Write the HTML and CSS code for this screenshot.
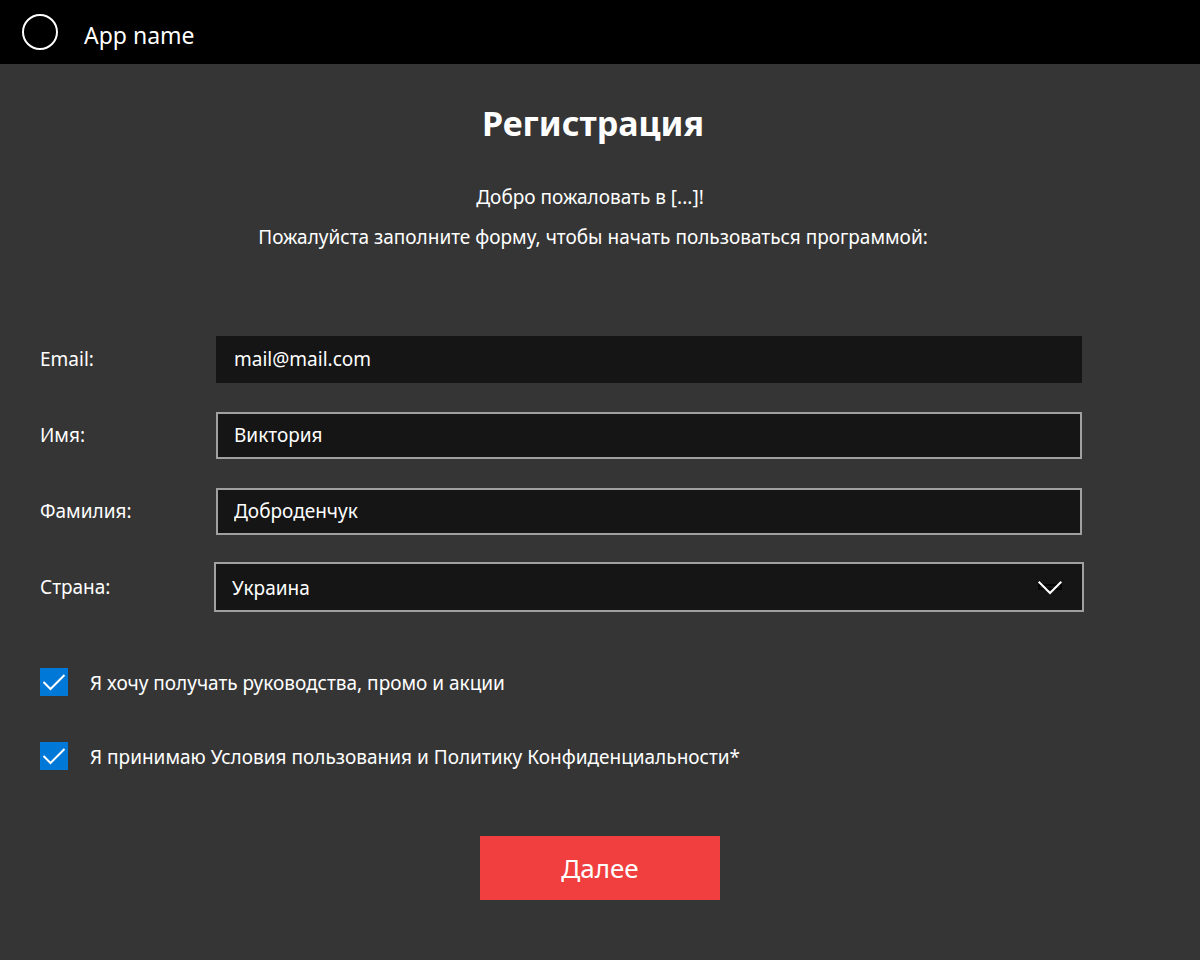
FILE: index.html
```html
<!DOCTYPE html>
<html lang="ru">
<head>
<meta charset="utf-8">
<meta name="viewport" content="width=device-width, initial-scale=1">
<title>Регистрация</title>
<link rel="stylesheet" href="styles.css">
</head>
<body>
<header class="topbar">
  <svg class="logo" viewBox="0 0 36 36" aria-hidden="true"><circle cx="18" cy="18" r="17" fill="none" stroke="currentColor" stroke-width="2"/></svg>
  <span class="app-name">App name</span>
</header>
<main class="page">
  <div class="intro">
    <h1 class="title">Регистрация</h1>
    <p class="welcome">Добро пожаловать в [...]!</p>
    <p class="lead">Пожалуйста заполните форму, чтобы начать пользоваться программой:</p>
  </div>
  <form class="form">
    <div class="fields">
      <div class="row">
        <label class="label" for="email">Email:</label>
        <input class="control control-plain" id="email" type="email" value="mail@mail.com" readonly>
      </div>
      <div class="row">
        <label class="label" for="first">Имя:</label>
        <input class="control" id="first" type="text" value="Виктория">
      </div>
      <div class="row">
        <label class="label" for="last">Фамилия:</label>
        <input class="control" id="last" type="text" value="Доброденчук">
      </div>
      <div class="row">
        <label class="label" for="country">Страна:</label>
        <div class="select-box">
          <select class="select" id="country"><option>Украина</option></select>
          <svg class="chevron" viewBox="0 0 24 14" aria-hidden="true"><path d="M0 3H24V9H0z" fill="#050505"/><path d="M2 5H22V7H2z" fill="#151515"/><path d="M.7.7 12 12 23.300.7" fill="none" stroke="currentColor" stroke-width="2"/></svg>
        </div>
      </div>
    </div>
    <div class="checks">
      <label class="check"><span class="tick-box"><input class="tick" type="checkbox" checked><svg class="mark" viewBox="0 0 28 28" aria-hidden="true"><path d="M3.500 14 10.500 21 24.500 7" fill="none" stroke="currentColor" stroke-width="2"/></svg></span><span class="check-text">Я хочу получать руководства, промо и акции</span></label>
      <label class="check"><span class="tick-box"><input class="tick" type="checkbox" checked><svg class="mark" viewBox="0 0 28 28" aria-hidden="true"><path d="M3.500 14 10.500 21 24.500 7" fill="none" stroke="currentColor" stroke-width="2"/></svg></span><span class="check-text">Я принимаю Условия пользования и Политику Конфиденциальности*</span></label>
    </div>
    <button class="submit" type="submit">Далее</button>
  </form>
</main>
</body>
</html>
```

FILE: styles.css
```css
* {
  box-sizing: border-box;
}

body {
  margin: 0;
  min-height: 100vh;
  background: #353535;
  color: #fff;
  font: 19px/28px "Noto Sans", "Open Sans", sans-serif;
}

.topbar {
  display: flex;
  align-items: flex-start;
  gap: 26px;
  height: 64px;
  padding: 14px 22px;
  background: #000;
}

.logo {
  width: 36px;
  height: 36px;
}

.app-name {
  padding-top: 3px;
  font-size: 23px;
  line-height: 36px;
}

.page {
  padding: 35px 40px 60px;
}

.intro {
  padding-right: 14px;
  text-align: center;
}

.title {
  margin: 0 0 36px;
  font-size: 34px;
  line-height: 48px;
}

.welcome,
.lead {
  margin: 0;
}

.welcome {
  margin-bottom: 12px;
  padding-right: 6px;
}

.form {
  margin-top: 85px;
}

.fields {
  display: grid;
  gap: 29px;
}

.row {
  display: grid;
  grid-template-columns: 176px 1fr;
  align-items: center;
  padding-right: 78px;
}

.label {
  padding-bottom: 2px;
}

.control,
.select {
  width: 100%;
  height: 47px;
  margin: 0;
  padding: 0 16px 2px;
  border: 2px solid #a0a0a0;
  border-radius: 0;
  background: #151515;
  color: #fff;
  font: inherit;
}

.control-plain {
  border-color: #151515;
}

.select-box {
  position: relative;
  margin: -2px -2px -1px;
}

.select {
  display: block;
  height: 50px;
  padding: 2px 16px 0;
  appearance: none;
}

.chevron {
  position: absolute;
  top: 19px;
  right: 22px;
  width: 24px;
  height: 14px;
  pointer-events: none;
}

.checks {
  display: grid;
  gap: 46px;
  margin-top: 57px;
}

.check {
  display: flex;
  gap: 22px;
  height: 28px;
}

.check-text {
  padding-top: 1px;
}

.tick-box {
  position: relative;
  width: 28px;
  height: 28px;
}

.tick {
  width: 28px;
  height: 28px;
  margin: 0;
  appearance: none;
  background: #0078d7;
}

.mark {
  position: absolute;
  inset: 0;
}

.submit {
  display: block;
  width: 240px;
  height: 64px;
  margin: 66px auto 0;
  border: 0;
  background: #f13f3f;
  color: #fff;
  font: inherit;
  font-size: 26px;
}
```
